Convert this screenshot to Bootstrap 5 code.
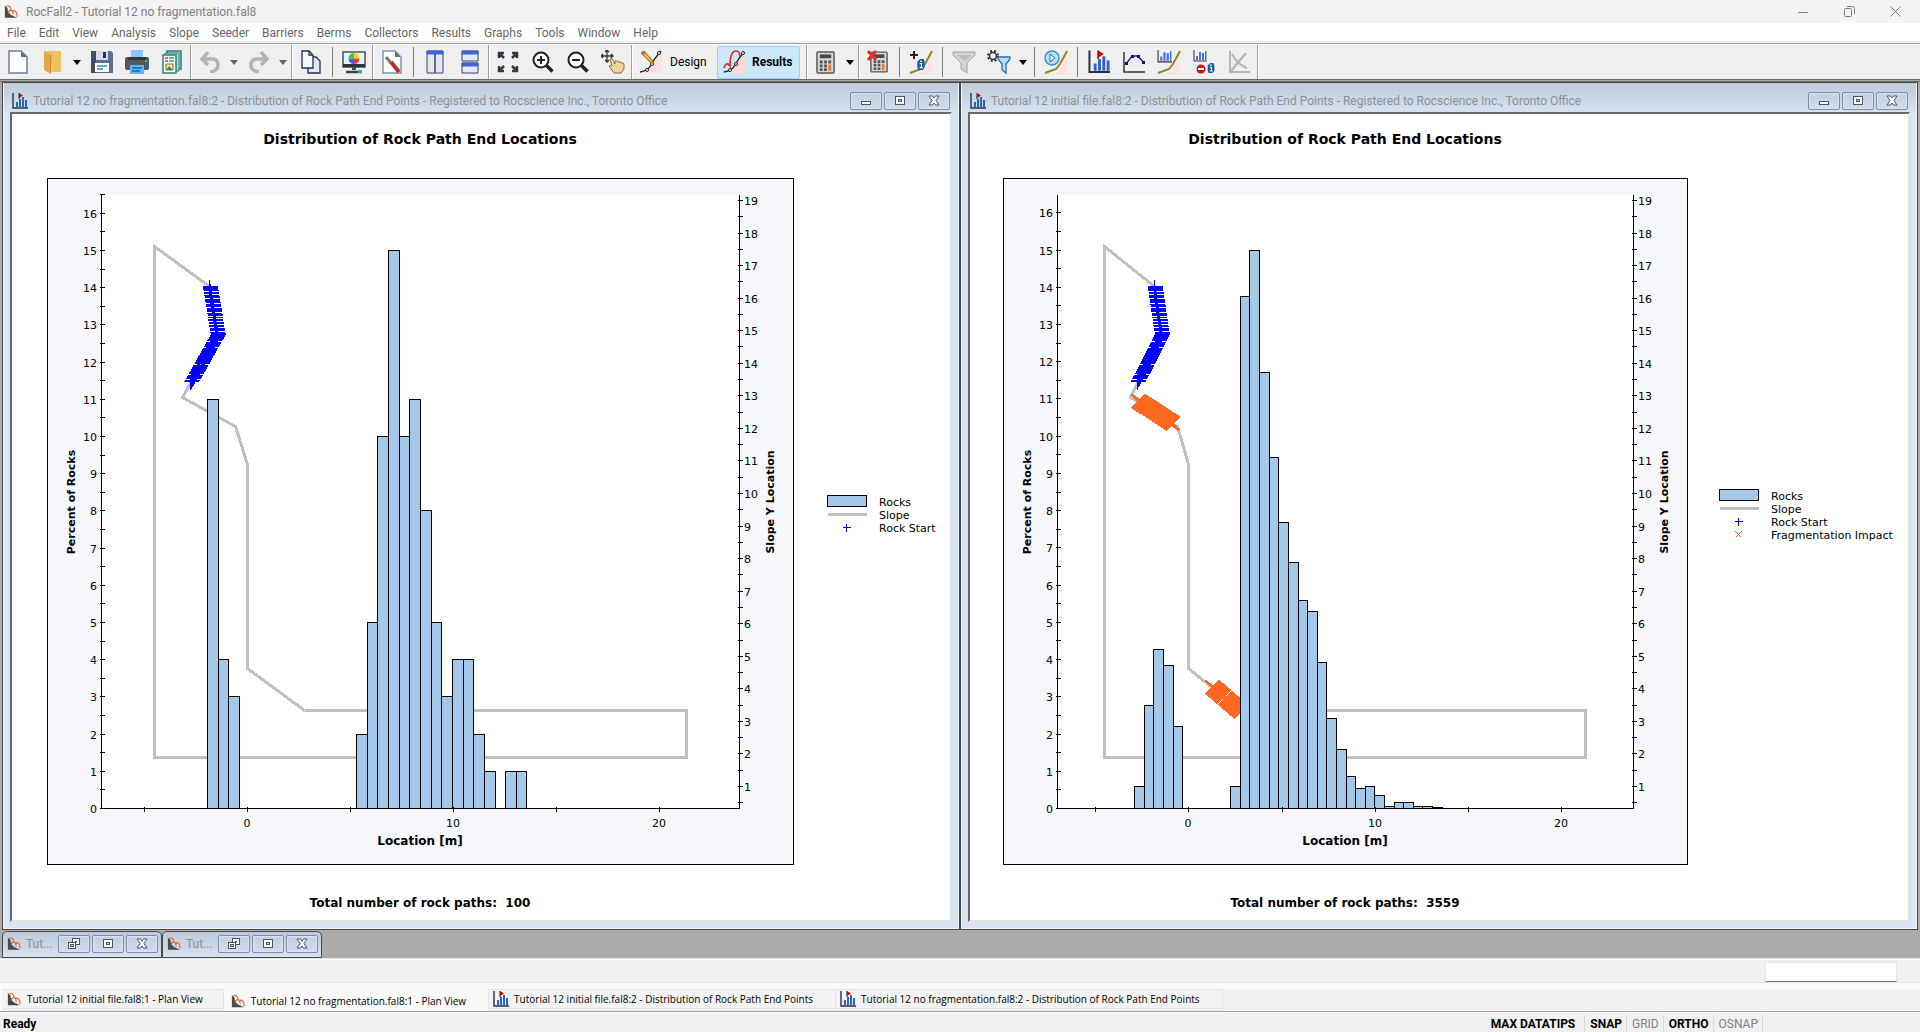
<!DOCTYPE html>
<html lang="en">
<head>
<meta charset="utf-8">
<meta name="viewport" content="width=device-width, initial-scale=1">
<title>RocFall2 - Tutorial 12 no fragmentation.fal8</title>
<link href="https://cdn.jsdelivr.net/npm/bootstrap@5.3.0/dist/css/bootstrap.min.css" rel="stylesheet">
<style>
  body { font: 12px/16px Roboto, "Liberation Sans", sans-serif; color: #000; background: #f0f0f0; overflow: hidden; }
  button { font: inherit; color: inherit; background: none; border: 0; padding: 0; }
  svg { display: block; flex-shrink: 0; }

  .title-strip { height: 23px; background: #f3f3f3; color: #808080; padding-right: 2px; }
  .caption-btn { width: 46px; height: 21px; display: grid; place-items: center; }

  .menu-strip { height: 20px; border-bottom: 2px solid #eee; padding-left: 1px; }
  .menu-strip a { color: #666; text-decoration: none; padding: 1px 7px 1px 6px; line-height: 18px; }

  .tool-strip { height: 36px; border-top: 1px solid #a0a0a0; box-shadow: inset 0 1px #fff; padding-top: 1px; background: #efefef; }
  .tool-btn { width: 35px; height: 34px; display: grid; place-items: center; }
  .tool-drop { width: 14px; height: 34px; display: grid; place-items: center; }
  .tool-end { width: 3px; height: 34px; border-left: 1px solid #efefef; background: linear-gradient(90deg, #a0a0a0 50%, #fff 50%); }
  .tool-split { width: 8px; height: 30px; background: linear-gradient(#808080, #808080) center / 1px 100% no-repeat; }
  .mode-btn { height: 33px; width: 83px; padding-left: 6px; gap: 7px; border-radius: 3px; }
  .mode-btn.is-on { background: #cce8ff; box-shadow: inset 0 0 0 1px #99d1ff; font-weight: bold; margin: 0 5px 0 1px; }

  .mdi-area { background: #ababab; border-top: 3px double #696969; padding: 0 2px; }
  .mdi-row { min-height: 0; }
  .doc-window { border: 1px solid #4a4a4a; background: #d7e4f2; padding: 0 7px 7px; min-width: 0; min-height: 0; box-shadow: inset 0 0 0 1px #eef4fa; }
  .doc-title { height: 29px; margin: 0 -6px; padding: 7px 8px 0 8px; color: #8f8f8f; gap: 5px;
               background: linear-gradient(#bccad9, #d5e2f0); }
  .doc-title .text-truncate { flex: 1; }
  .doc-view { border: 2px solid; border-color: #696969 #e3e3e3 #e3e3e3 #696969; background: #fff; min-height: 0; }
  .btn-set { display: flex; gap: 2px; }
  .doc-btn { width: 32px; height: 18px; border: 1px solid #7d8db0; border-radius: 2px; display: grid; place-items: center;
             background: linear-gradient(#c3d1e0, #cfdcea); box-shadow: inset 0 0 0 1px #d9e4f0; flex-shrink: 0; }
  .docked { padding-top: 1px; }
  .doc-icon { width: 160px; height: 27px; border: 1px solid #4a4a4a; border-radius: 5px 5px 0 0; padding: 0 5px 2px 4px; gap: 5px; color: #8f8f8f;
              background: linear-gradient(#bccad9, #d5e2f0); }

  .find-strip { height: 24px; border-top: 1px solid #e3e3e3; box-shadow: inset 0 1px #fff; padding: 3px 23px 0 0; }
  .find-strip input { width: 132px; height: 20px; border: 1px solid #e5e5e5; border-bottom-color: #7a7a7a; background: #fff; }

  .tab-strip { height: 29px; border-top: 1px solid #e3e3e3; background: #f9f9f9; padding: 6px 0 0 2px; font: 10px/14px "Open Sans", sans-serif; }
  .tab-strip .doc-tabs { background: #f0f0f0; }
  .doc-tab { height: 20px; padding: 0 20px 0 4px; gap: 5px; background: #f2f2f2; border: 1px solid #e3e3e3; border-left: 0; }
  .doc-tab + .doc-tab { padding-right: 22px; }
  .doc-tab.is-on { height: 22px; background: #f9f9f9; border-top-color: #f9f9f9; border-bottom: 0; padding-left: 6px; }

  .status-strip { height: 21px; border-top: 1px solid #a0a0a0; box-shadow: inset 0 1px #fff; padding: 3px 157px 0 3px; font-weight: bold; }
  .status-strip button { padding: 0 4px 0 5px; border-right: 1px solid #d7d7d7; height: 17px; }
  .status-strip .is-wide { padding-right: 9px; }
  .status-strip .is-off { color: #808080; font-weight: normal; }

  .chart { font: 11px "DejaVu Sans", Verdana, sans-serif; }
  .chart .head { font-size: 14px; font-weight: bold; }
  .chart .name { font-size: 12px; font-weight: bold; }
  .chart .side { font-size: 11px; font-weight: bold; }
  .chart .ink { shape-rendering: crispEdges; fill: none; stroke: #000; stroke-width: 1; }
  .chart .ink .hist { fill: #a4c8e8; }
  .chart .ink .slope { stroke: #c0c0c0; stroke-width: 3; }
  .chart .ink .start { stroke: #00f; }
  .chart .ink .frag { stroke: #ff6820; }
  .chart .ink .swarm { stroke-width: 1.5; }
</style>
<script src="https://cdn.jsdelivr.net/npm/bootstrap@5.3.0/dist/js/bootstrap.bundle.min.js"></script>
</head>
<body class="vh-100 d-flex flex-column">

<svg width="0" height="0" class="position-absolute" aria-hidden="true">
  <symbol id="rock" viewBox="0 0 16 16">
    <path d="M1 1l3 3q0 5 4 8l7 3H1z" fill="#4a4a4a"/>
    <path d="M3 1.500Q8 1 8 7M5 10q0-4 3.500-3.500 2 1 2 4.500M9 7q6-1 6 7" fill="none" stroke="#f0642d" stroke-width="1.400"/>
  </symbol>
  <symbol id="histo" viewBox="0 0 16 16">
    <path d="M1 0v15h15" fill="none" stroke="#26324a" stroke-width="1.400"/>
    <path d="M4 9h2v5H4zM7 6h2v8H7zM10 4h2v10h-2zM13 7h2v7h-2z" fill="#2f62c8"/>
    <path d="M7 0v6" stroke="#222"/><path d="M7 0l4 2.500-4 2.500z" fill="#d00000"/>
  </symbol>
  <symbol id="w-min" viewBox="0 0 12 12"><rect x="1.5" y="6.5" width="9" height="3" fill="#fff" stroke="#4d5368"/></symbol>
  <symbol id="w-max" viewBox="0 0 12 12"><rect x="1.5" y="1.5" width="9" height="8" fill="#fff" stroke="#4d5368"/><rect x="4.5" y="4.5" width="3" height="2" fill="#cfdcea" stroke="#4d5368"/></symbol>
  <symbol id="w-close" viewBox="0 0 12 12"><path d="M1 1h3.500l1.500 2 1.500-2H11L8 5.500 11 10H7.500L6 8l-1.500 2H1l3-4.500z" fill="#fff" stroke="#4d5368"/></symbol>
  <symbol id="w-restore" viewBox="0 0 14 14"><rect x="5.500" y="1.500" width="7" height="6" fill="#fff" stroke="#4d5368"/><rect x="8" y="4" width="2" height="1.500" fill="#4d5368"/><rect x="1.500" y="5.500" width="7" height="6" fill="#fff" stroke="#4d5368"/><rect x="3.500" y="7.500" width="3" height="2" fill="#cfdcea" stroke="#4d5368"/></symbol>
  <symbol id="drop" viewBox="0 0 8 5"><path d="M0 0h8L4 5z"/></symbol>
  <symbol id="profile" viewBox="0 0 24 24"><path d="M12 24l6-8 5-15v23z" fill="#ffe0dc"/><path d="M1 23l11-4 4-5 7-13" fill="none" stroke="#8c8a20" stroke-width="2"/></symbol>
  <symbol id="calc" viewBox="0 0 20 24">
    <rect x="1" y="1" width="18" height="22" rx="1" fill="#d8d8d8" stroke="#555" stroke-width="1.500"/>
    <rect x="4" y="3.500" width="12" height="4" fill="#484848"/>
    <path d="M4 10h3v3H4zM8.500 10h3v3h-3zM4 14h3v3H4zM8.500 14h3v3h-3zM4 18h3v3H4zM8.500 18h3v3h-3zM13 10h3v3h-3z" fill="#555"/>
    <path d="M13 14h3v7h-3z" fill="#f08030"/>
  </symbol>
  <symbol id="minibars" viewBox="0 0 14 12"><path d="M1 0v11h13" fill="none" stroke="#333"/><path d="M3 6h2v4H3zM6 2h2v8H6zM9 3h2v7H9zM12 1h1.500v9H12z" fill="#3f74d8"/></symbol>
  <symbol id="info" viewBox="0 0 8 12"><path d="M0 3l3-3h4l1 3v6l-2 3H1L0 9z" fill="#15609c"/><path d="M3 2.500h2M2.500 5H4.500v4M2.500 9.500h3.500" stroke="#fff" stroke-width="1.300" fill="none"/></symbol>
</svg>

<header>
  <div class="title-strip d-flex align-items-center ps-1">
    <svg width="14" height="15"><use href="#rock"/></svg>
    <span class="ps-1 ms-1">RocFall2 - Tutorial 12 no fragmentation.fal8</span>
    <button class="caption-btn ms-auto" aria-label="Minimize"><svg width="10" height="10"><path d="M0 5.500h10" stroke="#808080"/></svg></button>
    <button class="caption-btn" aria-label="Restore"><svg width="11" height="11" fill="none" stroke="#808080"><rect x=".5" y="2.500" width="7" height="8" rx="1"/><path d="M3 .5h5.500q2 0 2 2V8"/></svg></button>
    <button class="caption-btn" aria-label="Close"><svg width="11" height="11"><path d="M.5.5l10 10M10.500.5l-10 10" stroke="#808080"/></svg></button>
  </div>
  <nav class="menu-strip bg-white d-flex" aria-label="Main menu">
    <a href="#">File</a><a href="#">Edit</a><a href="#">View</a><a href="#">Analysis</a><a href="#">Slope</a><a href="#">Seeder</a><a href="#">Barriers</a><a href="#">Berms</a><a href="#">Collectors</a><a href="#">Results</a><a href="#">Graphs</a><a href="#">Tools</a><a href="#">Window</a><a href="#">Help</a>
  </nav>

  <div class="tool-strip d-flex align-items-center" role="toolbar" aria-label="Tools">
    <button class="tool-btn" aria-label="New"><svg width="20" height="24"><path d="M1 1h12l6 6v16H1z" fill="#fff" stroke="#6b7f9e" stroke-width="1.500"/><path d="M13 1v6h6z" fill="#5b7396"/></svg></button>
    <button class="tool-btn" aria-label="Open"><svg width="20" height="24"><path d="M1 1h17v21H6l-5-2z" fill="#f0c063"/><path d="M1 1l7 4v19l-7-4z" fill="#e0a94c"/><path d="M8 5l-1 18" stroke="#c18b32"/></svg></button>
    <button class="tool-drop" aria-label="Open options"><svg width="8" height="5"><use href="#drop"/></svg></button>
    <button class="tool-btn" aria-label="Save"><svg width="22" height="24"><path d="M0 1h20l2 2v20H0z" fill="#5b7090"/><path d="M0 1h5v22H0z" fill="#3e4d68"/><path d="M5 1h12v9H5z" fill="#d4dbe8"/><path d="M12 2h3v6h-3z" fill="#2c3444"/><path d="M4 13h14v9H4z" fill="#fff"/><path d="M6 16h10M6 19h6" stroke="#3b86d0" stroke-width="1.500"/></svg></button>
    <button class="tool-btn" aria-label="Print"><svg width="24" height="24"><path d="M6 0h12v8H6z" fill="#8cc6ff"/><rect y="7" width="24" height="13" rx="2" fill="#55595d"/><rect x="3" y="7" width="18" height="3" fill="#33373b"/><path d="M20 10h2v2h-2z" fill="#2fd36a"/><path d="M5 15h14v9H5z" fill="#60b4ff"/><path d="M7 18h10M7 21h8" stroke="#1d5fa8" stroke-width="1.500"/></svg></button>
    <button class="tool-btn" aria-label="Report"><svg width="20" height="24"><path d="M5 1h14v18H5z" fill="#a8dcdc" stroke="#2c8080" stroke-width="1.500"/><path d="M3 3h14v18H3z" fill="#a8dcdc" stroke="#2c8080"/><path d="M1 5h13v18H1z" fill="#fff" stroke="#2c8080" stroke-width="1.500"/><path d="M3 8h3M3 11h3" stroke="#d33" stroke-width="1.500"/><path d="M7 8h5M7 11h5" stroke="#39a939" stroke-width="1.500"/><path d="M4 14h7v6H4z" fill="#f3e3bb" stroke="#8a6b2c"/><path d="M4 20l3-4 4 4z" fill="#2f9b3c"/></svg></button>
    <span class="tool-end"></span>
    <button class="tool-btn" aria-label="Undo"><svg width="20" height="22"><path d="M8 1L2 8l6 6M2 8h10q6 0 6 6t-8 7" fill="none" stroke="#b4b4b4" stroke-width="3.500"/></svg></button>
    <button class="tool-drop" aria-label="Undo list"><svg width="8" height="5" fill="#666"><use href="#drop"/></svg></button>
    <button class="tool-btn" aria-label="Redo"><svg width="20" height="22"><path d="M12 1l6 7-6 6M18 8H8q-6 0-6 6t8 7" fill="none" stroke="#b4b4b4" stroke-width="3.500"/></svg></button>
    <button class="tool-drop" aria-label="Redo list"><svg width="8" height="5" fill="#666"><use href="#drop"/></svg></button>
    <span class="tool-end"></span>
    <button class="tool-btn" aria-label="Copy"><svg width="20" height="24" stroke="#26324a" stroke-width="1.300"><path d="M7 7h8l4 4v12H7z" fill="#dfe5f2"/><path d="M1 1h7l4 4v13H1z" fill="#f5f8ff"/><path d="M8 1v4h4" fill="none"/></svg></button>
    <span class="tool-split"></span>
    <button class="tool-btn" aria-label="Display options"><svg width="24" height="24"><rect x="1" y="2" width="22" height="15" fill="#eaf2fa" stroke="#48505c" stroke-width="1.500"/><path d="M1 14h22v3H1z" fill="#2e343c"/><path d="M12 3a5.500 5.500 0 0 1 5.500 5.500H12z" fill="#f7d51d"/><path d="M17.500 8.500A5.500 5.500 0 0 1 12 14V8.500z" fill="#ee3a3a"/><path d="M12 14a5.500 5.500 0 0 1-5.500-5.500H12z" fill="#3865ee"/><path d="M6.500 8.500A5.500 5.500 0 0 1 12 3v5.500z" fill="#38c85c"/><path d="M10 17h4v3h-4z" fill="#48505c"/><path d="M4 22h16" stroke="#3c444e" stroke-width="2.500"/><path d="M16 20h4v3h-4z" fill="#2ac060"/></svg></button>
    <span class="tool-end"></span>
    <button class="tool-btn" aria-label="Project settings"><svg width="20" height="24"><path d="M1 1h12l6 6v16H1z" fill="#fff" stroke="#8296b4" stroke-width="1.500"/><path d="M13 1v6h6z" fill="#5b7396"/><path d="M4 7l5 6" stroke="#777" stroke-width="3"/><path d="M9 12l8 10" stroke="#c9262c" stroke-width="4"/></svg></button>
    <span class="tool-split"></span>
    <button class="tool-btn" aria-label="Tile vertically"><svg width="18" height="24" fill="#e2e8f6" stroke="#39445e"><path d="M1 1h8v22H1zM9 1h8v22H9z"/><path d="M1 1h16v3H1z" fill="#3d66d2" stroke="#3d66d2"/></svg></button>
    <button class="tool-btn" aria-label="Tile horizontally"><svg width="18" height="24" fill="#e2e8f6" stroke="#39445e"><path d="M1 1h16v10H1zM1 13h16v10H1z"/><path d="M1 1h16v3H1zM1 13h16v3H1z" fill="#3d66d2" stroke="#3d66d2"/></svg></button>
    <span class="tool-end"></span>
    <button class="tool-btn" aria-label="Zoom all"><svg width="22" height="22" fill="none" stroke="#333a45" stroke-width="2.500"><path d="M2 7V2h5M2 2l5 5M15 2h5v5M20 2l-5 5M2 15v5h5M2 20l5-5M15 20h5v-5M20 20l-5-5"/></svg></button>
    <button class="tool-btn" aria-label="Zoom in"><svg width="22" height="22" fill="none" stroke="#222"><circle cx="9" cy="9" r="7.500" fill="#fff" stroke-width="2"/><path d="M5 9h8M9 5v8" stroke-width="2"/><path d="M14.500 14.500l6 6" stroke-width="3.500"/></svg></button>
    <button class="tool-btn" aria-label="Zoom out"><svg width="22" height="22" fill="none" stroke="#222"><circle cx="9" cy="9" r="7.500" fill="#fff" stroke-width="2"/><path d="M5 9h8" stroke-width="2"/><path d="M14.500 14.500l6 6" stroke-width="3.500"/></svg></button>
    <button class="tool-btn" aria-label="Pan"><svg width="24" height="24"><path d="M6 0v12M0 6h12M4 2l2-2 2 2M4 10l2 2 2-2M2 4L0 6l2 2M10 4l2 2-2 2" fill="none" stroke="#333" stroke-width="1.300"/><path d="M9 9q2-1 3 1l2 4v-3q2-1 3 1 3-1 3 1 2-1 3 1v5l-3 4h-7l-5-7q1-1 3 0z" fill="#f0d3a0" stroke="#8d6b35"/></svg></button>
    <span class="tool-end"></span>
    <button class="mode-btn d-flex align-items-center"><svg width="24" height="24"><path d="M3 23q8-2 10-8T23 1v22z" fill="#ffe0dc"/><path d="M1 22q8-1 11-7T22 1" fill="none" stroke="#222" stroke-width="1.300"/><g fill="#fff" stroke="#222"><circle cx="13" cy="14" r="1.500"/><circle cx="8" cy="20" r="1.500"/><circle cx="20" cy="3" r="1.500"/></g><path d="M2 3l3-2 8 9 1 3-3-1z" fill="#f7b52a" stroke="#9c6a11"/><path d="M2 3l3-2 2 2-3 2z" fill="#e84a5f"/></svg>Design</button>
    <button class="mode-btn is-on d-flex align-items-center" aria-pressed="true"><svg width="22" height="24"><path d="M3 23q8-2 10-8T22 1v22z" fill="#ffd9d5"/><path d="M1 22q8-1 11-7T21 2" fill="none" stroke="#222" stroke-width="1.300"/><path d="M1 18q2-7 6-2Q7 1 13 1q4 0 4 6" fill="none" stroke="#e8262a" stroke-width="1.700"/><g fill="#fff" stroke="#222"><circle cx="13" cy="14" r="1.500"/><circle cx="7" cy="20" r="1.500"/><circle cx="20" cy="3" r="1.500"/></g></svg>Results</button>
    <span class="tool-end"></span>
    <button class="tool-btn" aria-label="Compute"><svg width="19" height="23"><use href="#calc"/></svg></button>
    <button class="tool-drop" aria-label="Compute options"><svg width="8" height="5"><use href="#drop"/></svg></button>
    <span class="tool-end"></span>
    <button class="tool-btn" aria-label="Clear results"><svg width="22" height="24"><use href="#calc" x="3" width="18" height="24"/><path d="M1 1l8 9M9 1l-8 9" stroke="#e03030" stroke-width="3"/></svg></button>
    <span class="tool-split"></span>
    <button class="tool-btn" aria-label="Path information"><svg width="24" height="24"><use href="#profile"/><path d="M5 1v8M1 5h8" stroke="#222" stroke-width="2"/><use href="#info" x="8" y="9" width="8" height="11"/></svg></button>
    <span class="tool-split"></span>
    <button class="tool-btn" aria-label="Filter"><svg width="24" height="24"><path d="M1 2h22v3l-8 8v10l-6-4v-6L1 5z" fill="#d4d4d4" stroke="#a4a4a4"/><path d="M5 5h14l-6 6z" fill="#bbb"/></svg></button>
    <button class="tool-btn" aria-label="Filter settings"><svg width="24" height="24"><circle cx="6" cy="6" r="3.500" fill="none" stroke="#333" stroke-width="1.500"/><circle cx="6" cy="6" r="5" fill="none" stroke="#333" stroke-width="2" stroke-dasharray="2 2"/><path d="M11 7h12v2l-4 5v9l-4-3v-6l-4-5z" fill="#b9ddf8" stroke="#1c6fb5" stroke-width="1.300"/></svg></button>
    <button class="tool-drop" aria-label="Filter options"><svg width="8" height="5"><use href="#drop"/></svg></button>
    <span class="tool-split"></span>
    <button class="tool-btn" aria-label="Animate paths"><svg width="24" height="24"><use href="#profile"/><circle cx="8" cy="8" r="7" fill="#b9def5" stroke="#3a93cf" stroke-width="1.500"/><path d="M6 4l5 4-5 4z" fill="#fff" stroke="#1c6fb5"/></svg></button>
    <span class="tool-split"></span>
    <button class="tool-btn" aria-label="End points"><svg width="22" height="24"><use href="#histo" width="23" height="24"/></svg></button>
    <button class="tool-btn" aria-label="Envelope graph"><svg width="24" height="24"><path d="M2 2v20h21" fill="none" stroke="#333" stroke-width="1.500"/><path d="M4 14l6-8h6l6 7" fill="none" stroke="#23239a" stroke-width="1.500"/><path d="M3 12h3v3H3zM9 5h3v3H9zM15 5h3v3h-3zM20 11h3v3h-3z" fill="#10108a"/></svg></button>
    <button class="tool-btn" aria-label="Distribution on slope"><svg width="24" height="24"><use href="#profile"/><use href="#minibars" width="15" height="13"/></svg></button>
    <button class="tool-btn" aria-label="Barrier distribution"><svg width="22" height="24"><use href="#minibars" width="14" height="12"/><circle cx="8" cy="19" r="4.500" fill="#cc1414"/><path d="M5 19h6" stroke="#fff" stroke-width="2"/><use href="#info" x="14" y="13" width="8" height="10"/></svg></button>
    <button class="tool-btn" aria-label="Scatter graph"><svg width="22" height="24" fill="none" stroke="#b4b4b4" stroke-width="2"><path d="M2 1v21h20M3 21L18 3M4 4q5 10 15 14"/></svg></button>
    <span class="tool-end"></span>
  </div>
</header>

<main class="mdi-area flex-fill d-flex flex-column overflow-hidden">
  <div class="mdi-row d-flex flex-fill">
    <section class="doc-window d-flex flex-column flex-fill w-50">
      <div class="doc-title d-flex align-items-center">
        <svg width="16" height="16"><use href="#histo"/></svg>
        <span class="text-truncate">Tutorial 12 no fragmentation.fal8:2 - Distribution of Rock Path End Points - Registered to Rocscience Inc., Toronto Office</span>
        <span class="btn-set">
          <button class="doc-btn" aria-label="Minimize"><svg width="12" height="12"><use href="#w-min"/></svg></button>
          <button class="doc-btn" aria-label="Maximize"><svg width="12" height="12"><use href="#w-max"/></svg></button>
          <button class="doc-btn" aria-label="Close"><svg width="12" height="12"><use href="#w-close"/></svg></button>
        </span>
      </div>
      <div class="doc-view flex-fill"><svg class="chart w-100 h-100" id="chartNoFrag" viewBox="0 0 938 806" role="img" aria-label="End locations without fragmentation"></svg></div>
    </section>
    <section class="doc-window d-flex flex-column flex-fill w-50">
      <div class="doc-title d-flex align-items-center">
        <svg width="16" height="16"><use href="#histo"/></svg>
        <span class="text-truncate">Tutorial 12 initial file.fal8:2 - Distribution of Rock Path End Points - Registered to Rocscience Inc., Toronto Office</span>
        <span class="btn-set">
          <button class="doc-btn" aria-label="Minimize"><svg width="12" height="12"><use href="#w-min"/></svg></button>
          <button class="doc-btn" aria-label="Maximize"><svg width="12" height="12"><use href="#w-max"/></svg></button>
          <button class="doc-btn" aria-label="Close"><svg width="12" height="12"><use href="#w-close"/></svg></button>
        </span>
      </div>
      <div class="doc-view flex-fill"><svg class="chart w-100 h-100" id="chartFrag" viewBox="0 0 938 806" role="img" aria-label="End locations with fragmentation"></svg></div>
    </section>
  </div>
  <div class="docked d-flex">
    <div class="doc-icon d-flex align-items-center">
      <svg width="14" height="15"><use href="#rock"/></svg><span class="flex-fill">Tut...</span>
      <span class="btn-set">
        <button class="doc-btn" aria-label="Restore"><svg width="14" height="14"><use href="#w-restore"/></svg></button>
        <button class="doc-btn" aria-label="Maximize"><svg width="12" height="12"><use href="#w-max"/></svg></button>
        <button class="doc-btn" aria-label="Close"><svg width="12" height="12"><use href="#w-close"/></svg></button>
      </span>
    </div>
    <div class="doc-icon d-flex align-items-center">
      <svg width="14" height="15"><use href="#rock"/></svg><span class="flex-fill">Tut...</span>
      <span class="btn-set">
        <button class="doc-btn" aria-label="Restore"><svg width="14" height="14"><use href="#w-restore"/></svg></button>
        <button class="doc-btn" aria-label="Maximize"><svg width="12" height="12"><use href="#w-max"/></svg></button>
        <button class="doc-btn" aria-label="Close"><svg width="12" height="12"><use href="#w-close"/></svg></button>
      </span>
    </div>
  </div>
</main>

<footer>
  <div class="find-strip d-flex justify-content-end"><input type="text" aria-label="Coordinate entry"></div>
  <div class="tab-strip">
    <div class="doc-tabs d-flex align-items-start" role="tablist">
      <button class="doc-tab d-flex align-items-center" role="tab"><svg width="16" height="14"><use href="#rock"/></svg>Tutorial 12 initial file.fal8:1 - Plan View</button>
      <button class="doc-tab is-on d-flex align-items-center" role="tab" aria-selected="true"><svg width="16" height="14"><use href="#rock"/></svg>Tutorial 12 no fragmentation.fal8:1 - Plan View</button>
      <button class="doc-tab d-flex align-items-center" role="tab"><svg width="16" height="16"><use href="#histo"/></svg>Tutorial 12 initial file.fal8:2 - Distribution of Rock Path End Points</button>
      <button class="doc-tab d-flex align-items-center" role="tab"><svg width="16" height="16"><use href="#histo"/></svg>Tutorial 12 no fragmentation.fal8:2 - Distribution of Rock Path End Points</button>
    </div>
  </div>
  <div class="status-strip d-flex align-items-center">
    <span class="me-auto">Ready</span>
    <button class="is-wide">MAX DATATIPS</button><button>SNAP</button><button class="is-off">GRID</button><button>ORTHO</button><button class="is-off">OSNAP</button>
  </div>
</footer>

<script>
// Slope outline and seeder line, in metres (x, y)
const SLOPE = [[-4.53,17.6],[-1.86,16.36],[-1.48,14.89],[-3.15,12.95],[-.62,12.06],[0,10.88],[0,4.61],[2.75,3.35],[21.3,3.35],[21.3,1.88],[-4.53,1.88]];
const SEEDER = [[[-1.86,16.36],[-1.48,14.89],'111110110111011110111011110111011101101101110111'],
                [[-1.48,14.89],[-2.76,13.43],'111111101111101111111111111111011111111101111011']];

function drawChart(id, c) {
  const base = 694, top = 80;
  const X = m => Math.round(c.x0 + m * c.xs), P = v => Math.round(base - v * c.ps), Y = m => Math.round(704.6 - m * 32.56);
  let ink = '', txt = '';
  const line = (x1, y1, x2, y2) => `M${x1} ${y1}L${x2} ${y2}`;
  ink += `<rect x="${c.frame[0]}" y="64" width="${c.frame[1] - c.frame[0]}" height="686" style="fill:#f5f7fb"/>`;
  ink += `<rect x="${c.left}" y="${top}" width="${c.right - c.left}" height="${base - top}" style="fill:#fff;stroke:none"/>`;
  ink += `<path class="slope" d="M${SLOPE.map(p => X(p[0]) + ' ' + Y(p[1])).join('L')}Z"/>`;
  let d = '';
  for (const [a, b, on] of SEEDER)
    [...on].forEach((f, i) => {
      if (f === '0') return;
      const t = i / (on.length - 1), x = X(a[0] + (b[0] - a[0]) * t), y = Y(a[1] + (b[1] - a[1]) * t);
      d += line(x - 7, y, x + 8, y) + line(x, y - 7, x, y + 8);
    });
  ink += `<path class="start" d="${d}"/>`;
  // Impact crosses run along the slope; every nth one is missing after the first few
  for (const [x1, y1, x2, y2, nth] of c.frag || []) {
    d = '';
    for (let x = x1; x <= x2; x++) {
      if (x - x1 > 6 && x < x2 - 4 && (x - x1) % nth === 0) continue;
      const y = Math.round(y1 + (y2 - y1) * (x - x1) / (x2 - x1));
      d += line(x - 7, y - 7, x + 7, y + 7) + line(x - 7, y + 7, x + 7, y - 7);
    }
    ink += `<path class="frag swarm" d="${d}"/>`;
  }
  for (const [k, v] of c.bars) {
    const x = Math.round(c.bin0 + k * c.bin), w = Math.round(c.bin0 + (k + 1) * c.bin) - x, y = P(v);
    ink += `<rect class="hist" x="${x}" y="${y}" width="${w}" height="${base - y}"/>`;
  }
  d = line(c.left, top, c.left, base) + line(c.right, top, c.right, base) + line(c.left - 2, base, c.right, base);
  for (let v = 0; v <= c.ptop; v += .5) {
    d += line(c.left - 2, P(v), c.left + 3, P(v));
    if (v % 1 === 0) txt += `<text x="${c.left - 4}" y="${P(v) + 5}" text-anchor="end">${v}</text>`;
  }
  for (let v = .5; v <= 19; v += .5) {
    d += line(c.right - 2, Y(v), c.right + 3, Y(v));
    if (v % 1 === 0) txt += `<text x="${c.right + 5}" y="${Y(v) + 5}">${v}</text>`;
  }
  for (let v = -5; v <= 20; v += 5) {
    d += line(X(v), base - 2, X(v), base + 3);
    if (v >= 0 && v % 10 === 0) txt += `<text x="${X(v)}" y="713" text-anchor="middle">${v}</text>`;
  }
  ink += `<path d="${d}"/>`;
  const mid = (c.left + c.right) / 2;
  txt += `<text class="head" x="${mid}" y="30" text-anchor="middle">Distribution of Rock Path End Locations</text>
    <text class="name" x="${mid}" y="731" text-anchor="middle">Location [m]</text>
    <text class="name" x="${mid}" y="793" text-anchor="middle">Total number of rock paths:\u00a0 ${c.total}</text>
    <text class="side" transform="translate(${c.left - 26} 388) rotate(-90)" text-anchor="middle">Percent of Rocks</text>
    <text class="side" transform="translate(${c.right + 35} 388) rotate(-90)" text-anchor="middle">Slope Y Location</text>`;
  const [lx, ly] = c.legend;
  ink += `<rect class="hist" x="${lx}" y="${ly}" width="39" height="11"/><path class="slope" d="M${lx} ${ly + 19}h39"/>
    <path class="start" d="M${lx + 15} ${ly + 32}h8M${lx + 19} ${ly + 28}v8"/>`;
  if (c.frag) ink += `<path class="frag" d="M${lx + 16} ${ly + 42}l6 6M${lx + 16} ${ly + 48}l6-6"/>`;
  ['Rocks', 'Slope', 'Rock Start'].concat(c.frag ? 'Fragmentation Impact' : [])
    .forEach((t, i) => txt += `<text x="${lx + 52}" y="${ly + 11 + i * 13}">${t}</text>`);
  document.getElementById(id).innerHTML = `<g class="ink" transform="translate(.5 .5)">${ink}</g><g>${txt}</g>`;
}

drawChart('chartNoFrag', {
  frame: [35, 781], left: 89, right: 727, x0: 235.3, xs: 20.6, ps: 37.2, ptop: 16.5, bin0: 195.2, bin: 10.643, total: 100, legend: [815, 381],
  bars: [[0,11],[1,4],[2,3],[14,2],[15,5],[16,10],[17,15],[18,10],[19,11],[20,8],[21,5],[22,3],[23,4],[24,4],[25,2],[26,1],[28,1],[29,1]]
});
drawChart('chartFrag', {
  frame: [33, 717], left: 87, right: 663, x0: 218.4, xs: 18.64, ps: 37.23, ptop: 16, bin0: 164.2, bin: 9.606, total: 3559, legend: [749, 375],
  frag: [[168, 287, 202, 309, 3], [242, 573, 270, 597, 6]],
  bars: [[0,.58],[1,2.76],[2,4.26],[3,3.83],[4,2.19],[10,.58],[11,13.74],[12,14.98],[13,11.7],[14,9.42],[15,7.67],[16,6.6],[17,5.6],[18,5.28],[19,3.91],[20,2.41],[21,1.58],[22,.85],[23,.53],[24,.58],[25,.34],[26,.05],[27,.15],[28,.15],[29,.05],[30,.05],[31,.02]]
});
</script>
</body>
</html>
